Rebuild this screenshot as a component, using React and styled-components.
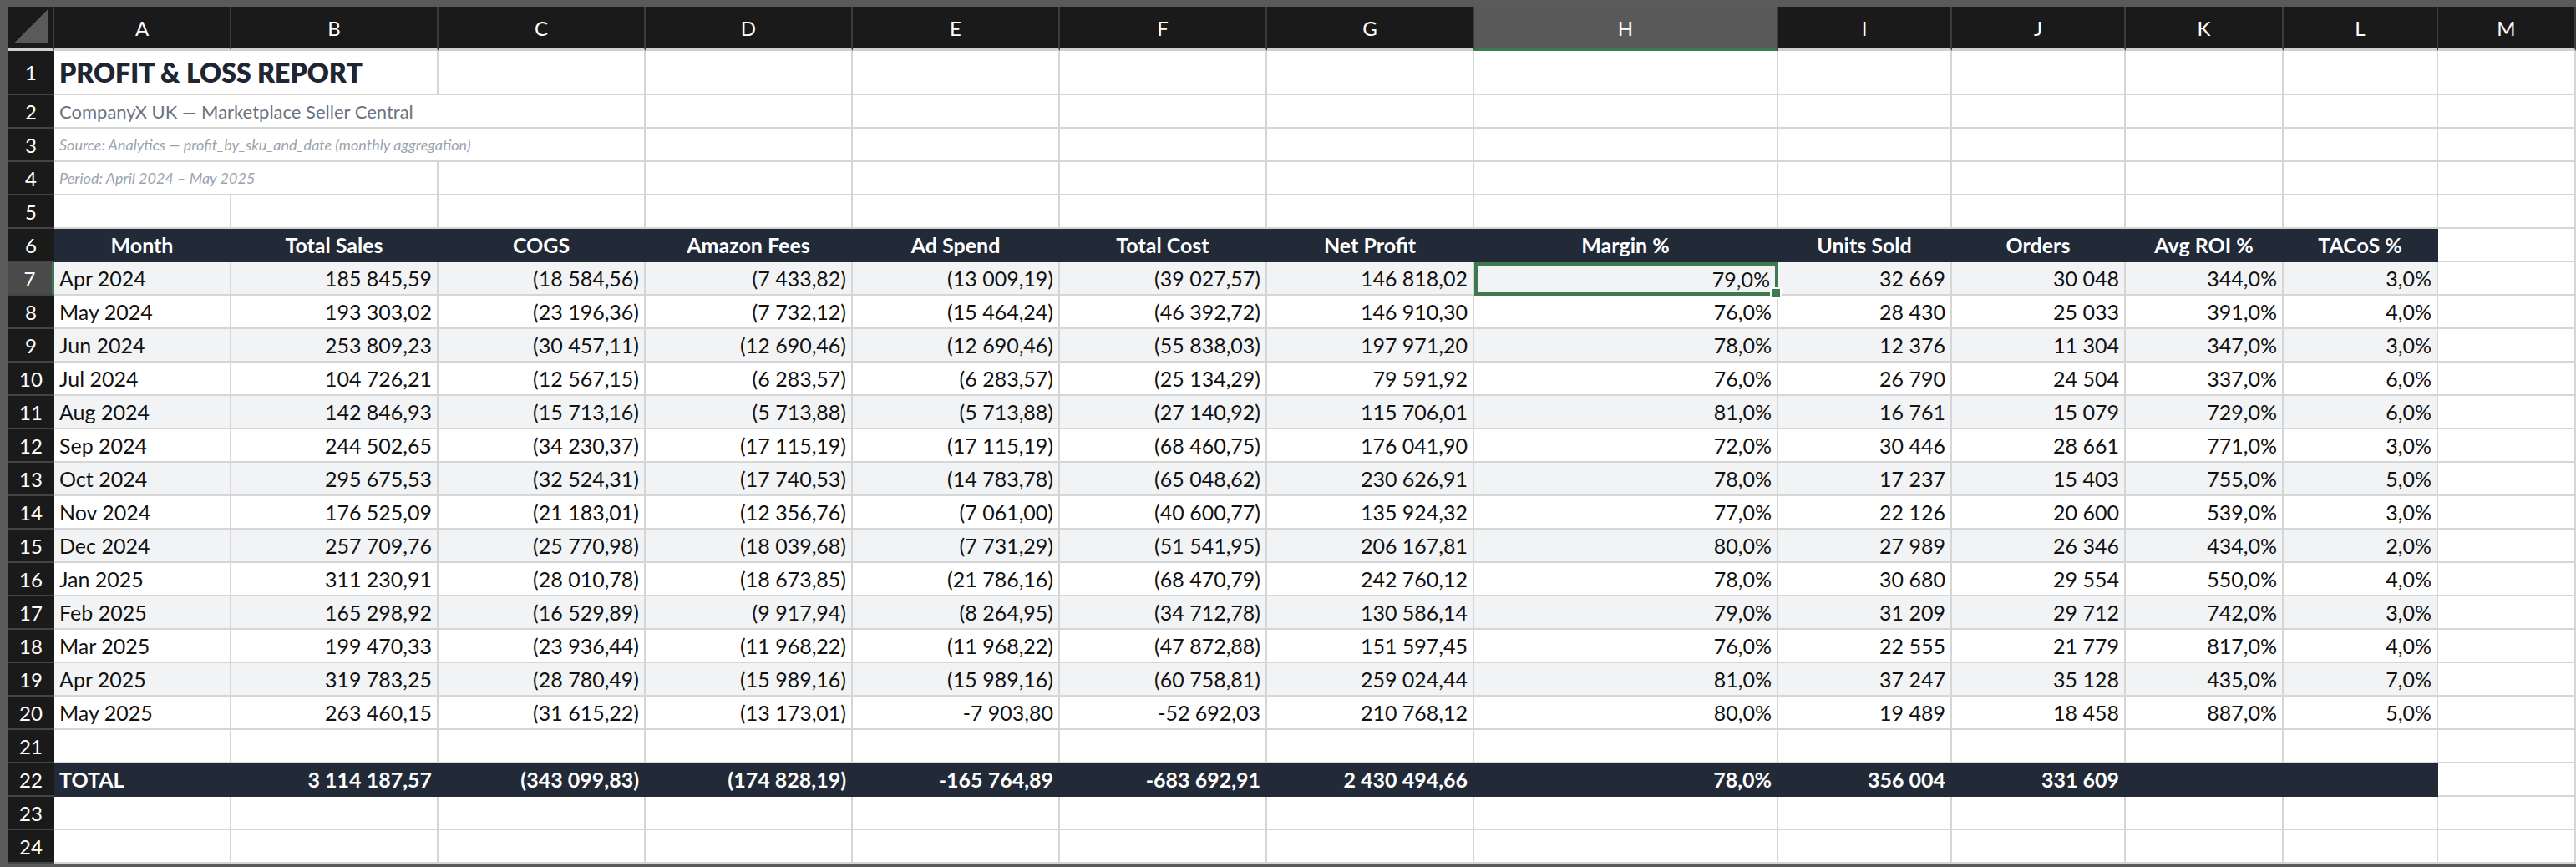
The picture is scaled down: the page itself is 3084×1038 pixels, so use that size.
import React from "react";
import styled, { createGlobalStyle, css } from "styled-components";

const Global = createGlobalStyle`
  html, body { margin: 0; padding: 0; background: #5a5a5a; }
  body { font-family: Lato, "Open Sans", sans-serif; }
`;

const COLS = "56px 212px 248px 248px 248px 248px 248px 248px 364px 208px 208px 189px 185px 1fr";

const Sheet = styled.div`
  padding: 8px 0 0 9px;
  width: 3084px;
  height: 1038px;
  box-sizing: border-box;
  overflow: hidden;
  background: #5a5a5a;
`;

const Row = styled.div`
  display: grid;
  grid-template-columns: ${COLS};
  height: ${(p) => p.$h || 40}px;
`;

const ColHead = styled.div`
  background: ${(p) => (p.$sel ? "#595959" : "#1a1a1a")};
  color: #fff;
  font-size: 24px;
  display: flex;
  align-items: center;
  justify-content: center;
  border-right: 2px solid #3c3c3c;
  border-bottom: ${(p) => (p.$sel ? "3px solid #3d7a4f" : "3px solid #d0d0d0")};
  box-sizing: border-box;
`;

const Corner = styled.div`
  background: #1a1a1a;
  border-right: 2px solid #3c3c3c;
  border-bottom: 3px solid #d0d0d0;
  box-sizing: border-box;
  position: relative;
  &::after {
    content: "";
    position: absolute;
    right: 6px;
    bottom: 6px;
    width: 40px;
    height: 40px;
    background: linear-gradient(135deg, transparent 50%, #5a5a5a 50%);
  }
`;

const RowHead = styled.div`
  background: ${(p) => (p.$sel ? "#4a4a4a" : "#1a1a1a")};
  color: #fff;
  font-size: 24px;
  display: flex;
  align-items: center;
  justify-content: center;
  border-bottom: 2px solid #444;
  border-right: ${(p) => (p.$sel ? "3px solid #3d7a4f" : "none")};
  box-sizing: border-box;
`;

const Cell = styled.div`
  box-sizing: border-box;
  border-right: 2px solid #d6d6d6;
  border-bottom: 2px solid #d6d6d6;
  background: ${(p) => (p.$dark ? "#222a38" : p.$alt ? "#f2f3f5" : "#fff")};
  color: ${(p) => (p.$dark ? "#fff" : "#111")};
  font-size: 25px;
  font-weight: ${(p) => (p.$bold ? 700 : 400)};
  display: flex;
  align-items: center;
  justify-content: ${(p) => (p.$align === "left" ? "flex-start" : p.$align === "center" ? "center" : "flex-end")};
  padding: 0 6px;
  white-space: nowrap;
  overflow: visible;
  grid-column: ${(p) => (p.$span ? `span ${p.$span}` : "auto")};
  ${(p) => p.$dark && css`border-right-color: #222a38; border-bottom-color: #222a38;`}
  ${(p) => p.$sel && css`border: 4px solid #3d7a4f; position: relative;
    &::after { content: ""; position: absolute; right: -8px; bottom: -8px; width: 10px; height: 10px; background: #3d7a4f; border: 2px solid #fff; }`}
`;

const Title = styled.span`
  font-size: 32px;
  font-weight: 800;
  color: #1f2633;
`;
const Sub = styled.span`
  font-size: 22px;
  color: #6b7280;
`;
const Note = styled.span`
  font-size: 18px;
  font-style: italic;
  color: #9ca3af;
`;

const letters = ["A","B","C","D","E","F","G","H","I","J","K","L","M"];
const headers = ["Month","Total Sales","COGS","Amazon Fees","Ad Spend","Total Cost","Net Profit","Margin %","Units Sold","Orders","Avg ROI %","TACoS %"];

const data = [
  ["Apr 2024","185 845,59","(18 584,56)","(7 433,82)","(13 009,19)","(39 027,57)","146 818,02","79,0%","32 669","30 048","344,0%","3,0%"],
  ["May 2024","193 303,02","(23 196,36)","(7 732,12)","(15 464,24)","(46 392,72)","146 910,30","76,0%","28 430","25 033","391,0%","4,0%"],
  ["Jun 2024","253 809,23","(30 457,11)","(12 690,46)","(12 690,46)","(55 838,03)","197 971,20","78,0%","12 376","11 304","347,0%","3,0%"],
  ["Jul 2024","104 726,21","(12 567,15)","(6 283,57)","(6 283,57)","(25 134,29)","79 591,92","76,0%","26 790","24 504","337,0%","6,0%"],
  ["Aug 2024","142 846,93","(15 713,16)","(5 713,88)","(5 713,88)","(27 140,92)","115 706,01","81,0%","16 761","15 079","729,0%","6,0%"],
  ["Sep 2024","244 502,65","(34 230,37)","(17 115,19)","(17 115,19)","(68 460,75)","176 041,90","72,0%","30 446","28 661","771,0%","3,0%"],
  ["Oct 2024","295 675,53","(32 524,31)","(17 740,53)","(14 783,78)","(65 048,62)","230 626,91","78,0%","17 237","15 403","755,0%","5,0%"],
  ["Nov 2024","176 525,09","(21 183,01)","(12 356,76)","(7 061,00)","(40 600,77)","135 924,32","77,0%","22 126","20 600","539,0%","3,0%"],
  ["Dec 2024","257 709,76","(25 770,98)","(18 039,68)","(7 731,29)","(51 541,95)","206 167,81","80,0%","27 989","26 346","434,0%","2,0%"],
  ["Jan 2025","311 230,91","(28 010,78)","(18 673,85)","(21 786,16)","(68 470,79)","242 760,12","78,0%","30 680","29 554","550,0%","4,0%"],
  ["Feb 2025","165 298,92","(16 529,89)","(9 917,94)","(8 264,95)","(34 712,78)","130 586,14","79,0%","31 209","29 712","742,0%","3,0%"],
  ["Mar 2025","199 470,33","(23 936,44)","(11 968,22)","(11 968,22)","(47 872,88)","151 597,45","76,0%","22 555","21 779","817,0%","4,0%"],
  ["Apr 2025","319 783,25","(28 780,49)","(15 989,16)","(15 989,16)","(60 758,81)","259 024,44","81,0%","37 247","35 128","435,0%","7,0%"],
  ["May 2025","263 460,15","(31 615,22)","(13 173,01)","-7 903,80","-52 692,03","210 768,12","80,0%","19 489","18 458","887,0%","5,0%"],
];
const total = ["TOTAL","3 114 187,57","(343 099,83)","(174 828,19)","-165 764,89","-683 692,91","2 430 494,66","78,0%","356 004","331 609","",""];

const Empties = ({ n }) => Array.from({ length: n }, (_, i) => <Cell key={i} />);

export default function App() {
  return (
    <>
      <Global />
      <Sheet>
        <Row $h={53}>
          <Corner />
          {letters.map((l) => <ColHead key={l} $sel={l === "H"}>{l}</ColHead>)}
        </Row>
        <Row $h={53}>
          <RowHead>1</RowHead>
          <Cell $span={2} $align="left"><Title>PROFIT &amp; LOSS REPORT</Title></Cell>
          <Empties n={11} />
        </Row>
        <Row>
          <RowHead>2</RowHead>
          <Cell $span={3} $align="left"><Sub>CompanyX UK — Marketplace Seller Central</Sub></Cell>
          <Empties n={10} />
        </Row>
        <Row>
          <RowHead>3</RowHead>
          <Cell $span={3} $align="left"><Note>Source: Analytics — profit_by_sku_and_date (monthly aggregation)</Note></Cell>
          <Empties n={10} />
        </Row>
        <Row>
          <RowHead>4</RowHead>
          <Cell $span={2} $align="left"><Note>Period: April 2024 – May 2025</Note></Cell>
          <Empties n={11} />
        </Row>
        <Row>
          <RowHead>5</RowHead>
          <Empties n={13} />
        </Row>
        <Row>
          <RowHead>6</RowHead>
          {headers.map((h) => <Cell key={h} $dark $bold $align="center">{h}</Cell>)}
          <Cell />
        </Row>
        {data.map((r, i) => (
          <Row key={i}>
            <RowHead $sel={i === 0}>{7 + i}</RowHead>
            {r.map((v, j) => (
              <Cell key={j} $alt={i % 2 === 0} $align={j === 0 ? "left" : "right"} $sel={i === 0 && j === 7}>{v}</Cell>
            ))}
            <Cell />
          </Row>
        ))}
        <Row>
          <RowHead>21</RowHead>
          <Empties n={13} />
        </Row>
        <Row>
          <RowHead>22</RowHead>
          {total.map((v, j) => <Cell key={j} $dark $bold $align={j === 0 ? "left" : "right"}>{v}</Cell>)}
          <Cell />
        </Row>
        <Row>
          <RowHead>23</RowHead>
          <Empties n={13} />
        </Row>
        <Row>
          <RowHead>24</RowHead>
          <Empties n={13} />
        </Row>
      </Sheet>
    </>
  );
}
